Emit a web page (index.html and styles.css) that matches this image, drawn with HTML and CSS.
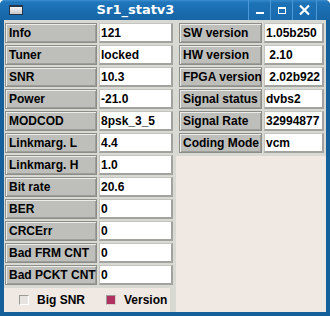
FILE: index.html
```html
<!DOCTYPE html>
<html>
<head>
<meta charset="utf-8">
<link rel="stylesheet" href="styles.css">
</head>
<body>
<div class="win">
  <div class="titlebar">
    <div class="appicon"></div>
    <div class="title">Sr1_statv3</div>
    <div class="btns">
      <div class="btn"><svg width="21" height="20" viewBox="0 0 21 20"><rect x="7" y="12" width="8" height="2" fill="#fff"/></svg></div>
      <div class="btn"><svg width="21" height="20" viewBox="0 0 21 20"><rect x="7.5" y="7.5" width="7" height="6" fill="none" stroke="#fff" stroke-width="1"/><rect x="7" y="7" width="8" height="2" fill="#fff"/></svg></div>
      <div class="btn close"><svg width="23" height="20" viewBox="0 0 23 20"><path d="M7 5.5L16 14.5M16 5.5L7 14.5" stroke="#fff" stroke-width="2.2" fill="none"/></svg></div>
    </div>
  </div>
  <div class="client">
    <div class="leftcol">
      <div class="table ltable">
        <div class="lbl">Info</div><div class="val">121</div>
        <div class="lbl">Tuner</div><div class="val">locked</div>
        <div class="lbl">SNR</div><div class="val">10.3</div>
        <div class="lbl">Power</div><div class="val">-21.0</div>
        <div class="lbl">MODCOD</div><div class="val">8psk_3_5</div>
        <div class="lbl">Linkmarg. L</div><div class="val">4.4</div>
        <div class="lbl">Linkmarg. H</div><div class="val">1.0</div>
        <div class="lbl">Bit rate</div><div class="val">20.6</div>
        <div class="lbl">BER</div><div class="val">0</div>
        <div class="lbl">CRCErr</div><div class="val">0</div>
        <div class="lbl">Bad FRM CNT</div><div class="val">0</div>
        <div class="lbl">Bad PCKT CNT</div><div class="val">0</div>
      </div>
      <div class="checks">
        <span class="cb"></span><span class="cbtext">Big SNR</span>
        <span class="cb on"></span><span class="cbtext">Version</span>
      </div>
    </div>
    <div class="rightcol">
      <div class="table rtable">
        <div class="lbl">SW version</div><div class="val">1.05b250</div>
        <div class="lbl">HW version</div><div class="val"> 2.10</div>
        <div class="lbl">FPGA version</div><div class="val"> 2.02b922</div>
        <div class="lbl">Signal status</div><div class="val">dvbs2</div>
        <div class="lbl">Signal Rate</div><div class="val">32994877</div>
        <div class="lbl">Coding Mode</div><div class="val">vcm</div>
      </div>
    </div>
  </div>
</div>
</body>
</html>
```
FILE: styles.css
```css
html, body {
  margin: 0;
  padding: 0;
  background: #ffffff;
}
.win {
  width: 330px;
  height: 316px;
  background: #15609b;
  box-sizing: border-box;
  border-radius: 5px 5px 0 0;
  overflow: hidden;
}
.titlebar {
  height: 20px;
  display: flex;
  align-items: center;
  background: linear-gradient(#3e90d4 0px, #2077bb 2px, #1a6db0 10px, #1765a6 20px);
}
.appicon {
  width: 12px;
  height: 7px;
  margin-left: 9px;
  border: 1px solid #23374c;
  border-top: 2px solid #23374c;
  background: linear-gradient(#f4f4f4, #c9c9c9);
}
.title {
  flex: 1;
  text-align: center;
  color: #ffffff;
  font-family: "DejaVu Sans", sans-serif;
  font-weight: bold;
  font-size: 13px;
  line-height: 20px;
}
.btns {
  display: flex;
  height: 20px;
  margin-right: 13px;
}
.btn {
  width: 21px;
  height: 20px;
  border-left: 1px solid #4d98d6;
  background: linear-gradient(#3589cd 0px, #1d72b6 3px, #176aac 20px);
}
.btn.close {
  width: 23px;
  border-right: 1px solid #4d98d6;
}
.btn svg {
  display: block;
}
.client {
  display: flex;
  height: 292px;
  margin: 0 4px;
  background: #efe8e3;
}
.leftcol {
  width: 172px;
  flex-shrink: 0;
  background: #d9d9d3;
  display: flex;
  flex-direction: column;
}
.rightcol {
  flex: 1;
  background: #efe8e3;
}
.table {
  display: grid;
  grid-auto-rows: 20px;
  row-gap: 2px;
  column-gap: 2px;
  background: #d9d9d3;
  font-family: "Liberation Sans", Arial, sans-serif;
  font-weight: bold;
  font-size: 12px;
  color: #000;
}
.ltable {
  grid-template-columns: 92px 74px;
  padding: 3px 3px 3px 1px;
}
.rtable {
  grid-template-columns: 83px 60px;
  padding: 3px 2px 3px 3px;
}
.lbl, .val {
  box-sizing: border-box;
  display: flex;
  align-items: center;
  white-space: pre;
  overflow: hidden;
}
.lbl {
  background: #bebebb;
  border: 1px solid #8c8c89;
  box-shadow: inset 1px 1px 0 #ececea, inset -1px -1px 0 #9d9d9a;
  padding-left: 3px;
}
.val {
  background: #ffffff;
  border-top: 1px solid #c4c4c0;
  border-left: 1px solid #c4c4c0;
  border-right: 2px solid #a2a29e;
  border-bottom: 2px solid #a2a29e;
  padding-left: 1px;
  padding-top: 1px;
}
.checks {
  flex: 1;
  margin-right: 6px;
  background: #efe8e3;
  display: flex;
  align-items: center;
  padding-left: 15px;
  white-space: nowrap;
  font-family: "Liberation Sans", Arial, sans-serif;
  font-weight: bold;
  font-size: 12px;
  color: #000;
}
.cb {
  flex: 0 0 10px;
  width: 10px;
  height: 10px;
  box-sizing: border-box;
  background: #e6e4e0;
  border-top: 1px solid #9a9a96;
  border-left: 1px solid #9a9a96;
  border-right: 1px solid #ffffff;
  border-bottom: 1px solid #ffffff;
  margin-right: 8px;
}
.cb.on {
  background: #b03060;
  border: 1px solid #d8d0cc;
  border-top-color: #9a9a96;
  border-left-color: #9a9a96;
}
.cbtext {
  flex-shrink: 0;
  margin-right: 21px;
}
```
